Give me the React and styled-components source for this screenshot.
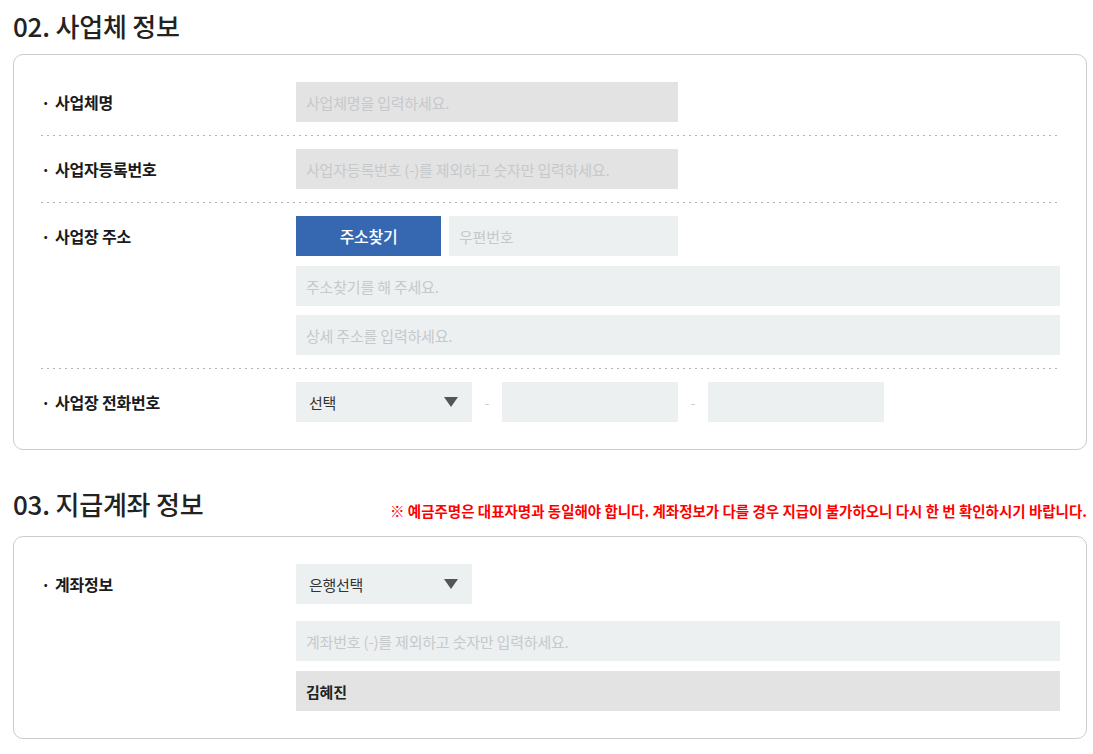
import React from "react";
import styled, { createGlobalStyle } from "styled-components";

const GlobalStyle = createGlobalStyle`
  body {
    margin: 0;
    background: #fff;
    font-family: "Noto Sans CJK KR", "Noto Sans", sans-serif;
    color: #222;
  }
`;

const Page = styled.div`
  width: 1074px;
  padding: 10px 0 0 13px;
`;

const SectionHead = styled.div`
  display: flex;
  justify-content: space-between;
  align-items: flex-end;
  margin-top: ${(p) => p.top || 0}px;
  margin-bottom: ${(p) => p.bottom || 12}px;
`;

const Title = styled.h2`
  margin: 0;
  font-size: 26px;
  line-height: 32px;
  font-weight: 500;
  color: #222;
  letter-spacing: -0.2px;
`;

const Notice = styled.p`
  margin: 0;
  font-size: 14.5px;
  line-height: 18px;
  font-weight: 700;
  color: #f00;
  letter-spacing: 0;
  white-space: nowrap;
`;

const Card = styled.div`
  border: 1px solid #cbcbd2;
  border-radius: 10px;
  padding: 27px 26px 27px 27px;
`;

const Row = styled.div`
  display: flex;
  padding: 13px 0 14px;
  position: relative;

  &::after {
    content: "";
    position: absolute;
    left: 0;
    right: 2px;
    bottom: 0;
    height: 1px;
    background: repeating-linear-gradient(to right, #b4b4b4 0 2px, transparent 2px 6px);
  }

  &:first-child {
    padding-top: 0;
  }
  &:last-child {
    padding-bottom: 0;
  }
  &:last-child::after {
    display: none;
  }
`;

const Label = styled.div`
  width: 255px;
  flex-shrink: 0;
  height: 40px;
  line-height: 40px;
  font-size: 16px;
  font-weight: 700;
  letter-spacing: -0.2px;
  color: #1a1a1a;

  &::before {
    content: "·";
    display: inline-block;
    width: 14px;
    font-weight: 700;
  }
`;

const Fields = styled.div`
  flex: 1;
  display: flex;
  flex-direction: column;
  gap: ${(p) => p.gap || 10}px;
`;

const Line = styled.div`
  display: flex;
  align-items: center;
  gap: 8px;
  margin-bottom: ${(p) => p.after || 0}px;
`;

const Input = styled.input`
  box-sizing: border-box;
  width: ${(p) => (p.w ? `${p.w}px` : "100%")};
  height: 40px;
  border: none;
  outline: none;
  padding: 0 10px;
  font-family: inherit;
  font-size: 15px;
  letter-spacing: -0.2px;
  font-weight: ${(p) => (p.bold ? 700 : 400)};
  color: #222;
  background: ${(p) => (p.grey ? "#e3e3e3" : "#edf0f1")};

  &::placeholder {
    color: #c6c9cb;
  }
`;

const Button = styled.button`
  width: 145px;
  height: 40px;
  border: none;
  background: #3568b0;
  color: #fff;
  font-family: inherit;
  font-size: 16px;
  font-weight: 500;
  letter-spacing: -0.3px;
`;

const Select = styled.div`
  box-sizing: border-box;
  width: 176px;
  height: 40px;
  display: flex;
  align-items: center;
  justify-content: space-between;
  padding: 0 14px 0 13px;
  background: #edf0f1;
  font-size: 15px;
  letter-spacing: -0.3px;
  color: #333;
`;

const Caret = styled.span`
  width: 0;
  height: 0;
  border-left: 7px solid transparent;
  border-right: 7px solid transparent;
  border-top: 10px solid #555;
`;

const Dash = styled.span`
  width: 30px;
  text-align: center;
  color: #c8c8c8;
  font-size: 13px;
`;

const PhoneLine = styled.div`
  display: flex;
  align-items: center;
`;

export default function App() {
  return (
    <Page>
      <GlobalStyle />
      <SectionHead bottom={12}>
        <Title>02. 사업체 정보</Title>
      </SectionHead>
      <Card>
        <Row>
          <Label>사업체명</Label>
          <Fields>
            <Input grey w={382} placeholder="사업체명을 입력하세요." />
          </Fields>
        </Row>
        <Row>
          <Label>사업자등록번호</Label>
          <Fields>
            <Input grey w={382} placeholder="사업자등록번호 (-)를 제외하고 숫자만 입력하세요." />
          </Fields>
        </Row>
        <Row>
          <Label>사업장 주소</Label>
          <Fields gap={9}>
            <Line after={1}>
              <Button>주소찾기</Button>
              <Input w={229} placeholder="우편번호" />
            </Line>
            <Input placeholder="주소찾기를 해 주세요." />
            <Input placeholder="상세 주소를 입력하세요." />
          </Fields>
        </Row>
        <Row>
          <Label>사업장 전화번호</Label>
          <Fields>
            <PhoneLine>
              <Select>
                선택
                <Caret />
              </Select>
              <Dash>-</Dash>
              <Input w={176} />
              <Dash>-</Dash>
              <Input w={176} />
            </PhoneLine>
          </Fields>
        </Row>
      </Card>

      <SectionHead top={38} bottom={16}>
        <Title>03. 지급계좌 정보</Title>
        <Notice>※ 예금주명은 대표자명과 동일해야 합니다. 계좌정보가 다를 경우 지급이 불가하오니 다시 한 번 확인하시기 바랍니다.</Notice>
      </SectionHead>
      <Card>
        <Row>
          <Label>계좌정보</Label>
          <Fields gap={17}>
            <Select>
              은행선택
              <Caret />
            </Select>
            <Fields>
              <Input placeholder="계좌번호 (-)를 제외하고 숫자만 입력하세요." />
              <Input grey bold defaultValue="김혜진" />
            </Fields>
          </Fields>
        </Row>
      </Card>
    </Page>
  );
}
